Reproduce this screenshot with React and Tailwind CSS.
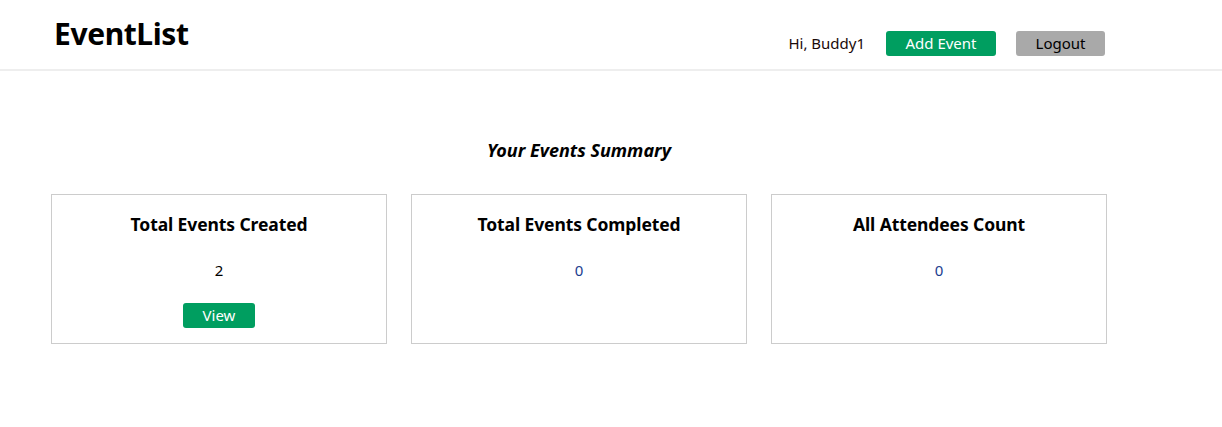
import React from "react";

const stats = [
  { title: "Total Events Created", value: 2, valueClass: "text-black", showView: true },
  { title: "Total Events Completed", value: 0, valueClass: "text-[#1a3d8f]", showView: false },
  { title: "All Attendees Count", value: 0, valueClass: "text-[#1a3d8f]", showView: false },
];

const App = () => {
  return (
    <div className="min-h-[427px] bg-white text-black font-['Segoe_UI','Noto_Sans',sans-serif]">
      {/* header */}
      <header className="h-[71px] border-b-2 border-[#eeeeee] flex items-start pl-[54px] pr-[117px]">
        <h1 className="text-[30px] font-bold leading-none mt-[19px] tracking-[-0.4px]">EventList</h1>
        <div className="ml-auto flex items-center mt-[31px] text-[15px]">
          <span className="mr-[21px] text-[#1a0a0a]">Hi, Buddy1</span>
          <button className="w-[110px] h-[25px] rounded-[3px] bg-[#009e60] text-white leading-none">Add Event</button>
          <button className="ml-[20px] w-[89px] h-[25px] rounded-[3px] bg-[#a9a9a9] text-black leading-none">Logout</button>
        </div>
      </header>

      {/* summary */}
      <main className="pl-[51px] pt-[70px]">
        <h2 className="w-[1056px] text-center text-[18px] font-bold italic leading-none">Your Events Summary</h2>
        <div className="mt-[35px] flex gap-[24px]">
          {stats.map((s) => (
            <div key={s.title} className="w-[336px] h-[150px] border border-[#cccccc] flex flex-col items-center pt-[18px]">
              <h3 className="text-[17.5px] font-bold leading-[22px] tracking-[-0.1px]">{s.title}</h3>
              <p className={`mt-[28px] text-[15px] leading-none ${s.valueClass}`}>{s.value}</p>
              {s.showView && (
                <button className="mt-[25px] w-[72px] h-[25px] rounded-[3px] bg-[#009e60] text-white text-[15px] leading-none">View</button>
              )}
            </div>
          ))}
        </div>
      </main>
    </div>
  );
};

export default App;
